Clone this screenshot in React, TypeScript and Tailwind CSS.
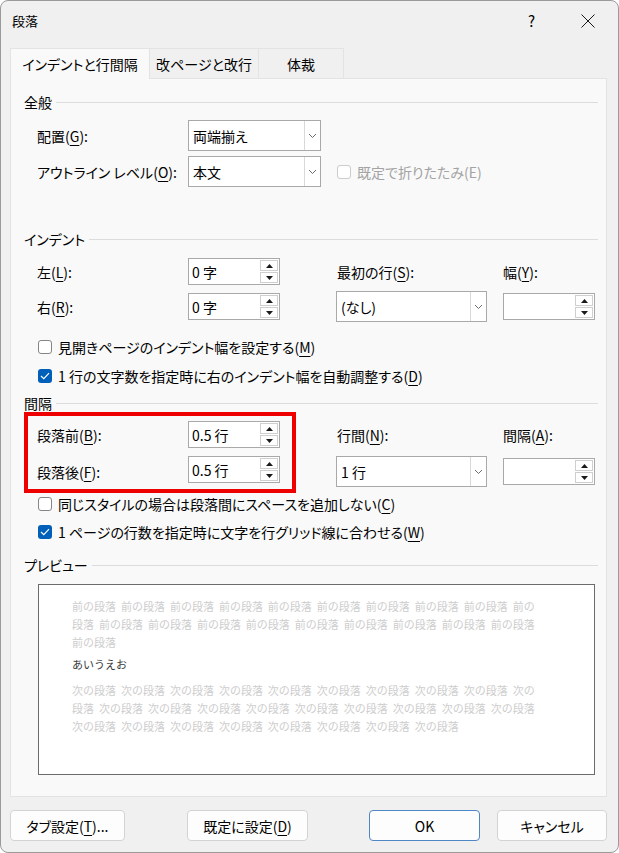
import React from 'react';

const Acc = ({ children }: { children: React.ReactNode }) => (
  <span className="underline underline-offset-[3px] decoration-1">{children}</span>
);

const Chevron = () => (
  <svg width="9" height="6" viewBox="0 0 9 6">
    <path d="M1 1 L4.5 4.5 L8 1" fill="none" stroke="#6b6b6b" strokeWidth="1" />
  </svg>
);

const Tri = ({ up }: { up?: boolean }) => (
  <svg width="7" height="4" viewBox="0 0 7 4">
    <path d={up ? 'M0 4 L3.5 0 L7 4 Z' : 'M0 0 L3.5 4 L7 0 Z'} fill="#1a1a1a" />
  </svg>
);

const Combo = ({ value, w }: { value: string; w: string }) => (
  <div className={`h-[31px] ${w} flex bg-white border border-[#a9a9a9]`}>
    <div className="flex-1 flex items-center pl-[4px]">{value}</div>
    <div className="w-[16px] border-l border-[#d9d9d9] flex items-center justify-center">
      <Chevron />
    </div>
  </div>
);

const Spin = ({ value }: { value?: string }) => (
  <div className="h-[27px] w-[92px] flex bg-white border border-[#a9a9a9]">
    <div className="flex-1 flex items-center pl-[3px]">{value}</div>
    <div className="w-[19px] flex flex-col py-[1px] pr-[1px] gap-[1px]">
      <div className="flex-1 border border-[#cfcfcf] flex items-center justify-center">
        <Tri up />
      </div>
      <div className="flex-1 border border-[#cfcfcf] flex items-center justify-center">
        <Tri />
      </div>
    </div>
  </div>
);

const Check = ({ checked, disabled }: { checked?: boolean; disabled?: boolean }) =>
  checked ? (
    <div className="w-[14px] h-[14px] rounded-[3px] bg-[#005fb8] flex items-center justify-center">
      <svg width="10" height="8" viewBox="0 0 10 8">
        <path d="M1 4 L3.8 6.6 L9 1.2" fill="none" stroke="#fff" strokeWidth="1.2" />
      </svg>
    </div>
  ) : (
    <div
      className={`w-[14px] h-[14px] rounded-[3px] bg-white border ${
        disabled ? 'border-[#cccccc]' : 'border-[#858585]'
      }`}
    />
  );

const Header = ({ title, className }: { title: string; className: string }) => (
  <div className={`flex items-center h-[20px] pl-[13px] pr-[8px] ${className}`}>
    <span>{title}</span>
    <div className="flex-1 h-px bg-[#dcdcdc] ml-[4px]" />
  </div>
);

const CheckRow = ({ checked, className, children }: { checked?: boolean; className: string; children: React.ReactNode }) => (
  <div className={`flex items-center h-[20px] pl-[27px] gap-[6px] ${className}`}>
    <Check checked={checked} />
    <span>{children}</span>
  </div>
);

const prev1 = [
  '前の段落 前の段落 前の段落 前の段落 前の段落 前の段落 前の段落 前の段落 前の段落 前の',
  '段落 前の段落 前の段落 前の段落 前の段落 前の段落 前の段落 前の段落 前の段落 前の段落',
  '前の段落',
];
const next1 = [
  '次の段落 次の段落 次の段落 次の段落 次の段落 次の段落 次の段落 次の段落 次の段落 次の',
  '段落 次の段落 次の段落 次の段落 次の段落 次の段落 次の段落 次の段落 次の段落 次の段落',
  '次の段落 次の段落 次の段落 次の段落 次の段落 次の段落 次の段落 次の段落',
];

export default function App() {
  return (
    <div className="w-[619px] h-[853px] bg-[#f0f0f0] border border-[#9a9a9a] rounded-[8px] overflow-hidden flex flex-col text-[14px] text-black font-['Noto_Sans_CJK_JP',sans-serif] [font-feature-settings:'palt'] leading-none">
      {/* title bar */}
      <div className="h-[39px] flex items-center pl-[11px] shrink-0">
        <span className="text-[13px]">段落</span>
        <span className="ml-auto text-[15px] mr-[46px]">?</span>
        <svg width="14" height="14" viewBox="0 0 14 14" className="mr-[23px]">
          <path d="M0.5 0.5 L13.5 13.5 M13.5 0.5 L0.5 13.5" stroke="#1a1a1a" strokeWidth="1" />
        </svg>
      </div>

      {/* tabs */}
      <div className="flex ml-[9px] mt-[8px] h-[31px] shrink-0 relative z-10">
        <div className="w-[140px] bg-[#f9f9f9] border border-b-0 border-[#e3e3e3] flex items-center justify-center">
          インデントと行間隔
        </div>
        <div className="w-[109px] border-t border-r border-[#e3e3e3] border-b flex items-center justify-center">
          改ページと改行
        </div>
        <div className="w-[85px] border-t border-r border-[#e3e3e3] border-b flex items-center justify-center">
          体裁
        </div>
      </div>

      {/* panel */}
      <div className="ml-[9px] -mt-px w-[597px] h-[719px] bg-[#f9f9f9] border border-[#e3e3e3] shrink-0 flex flex-col">
        <Header title="全般" className="mt-[13px]" />
        <div className="flex items-center pl-[26px] mt-[8px]">
          <span className="w-[151px]">
            配置(<Acc>G</Acc>):
          </span>
          <Combo value="両端揃え" w="w-[133px]" />
        </div>
        <div className="flex items-center pl-[26px] mt-[5px]">
          <span className="w-[151px]">
            アウトライン レベル(<Acc>O</Acc>):
          </span>
          <Combo value="本文" w="w-[133px]" />
          <div className="ml-[16px] flex items-center gap-[6px] text-[#a3a3a3]">
            <Check disabled />
            <span>既定で折りたたみ(E)</span>
          </div>
        </div>

        <Header title="インデント" className="mt-[42px]" />
        <div className="flex items-center pl-[26px] mt-[9px] h-[27px]">
          <span className="w-[151px]">
            左(<Acc>L</Acc>):
          </span>
          <Spin value="0 字" />
          <span className="ml-[57px] w-[166px]">
            最初の行(<Acc>S</Acc>):
          </span>
          <span>
            幅(<Acc>Y</Acc>):
          </span>
        </div>
        <div className="flex items-center pl-[26px] mt-[6px] h-[31px]">
          <span className="w-[151px]">
            右(<Acc>R</Acc>):
          </span>
          <Spin value="0 字" />
          <div className="ml-[56px]">
            <Combo value="(なし)" w="w-[151px]" />
          </div>
          <div className="ml-[16px]">
            <Spin />
          </div>
        </div>
        <CheckRow className="mt-[15px]">
          見開きページのインデント幅を設定する(<Acc>M</Acc>)
        </CheckRow>
        <CheckRow checked className="mt-[9px]">
          1 行の文字数を指定時に右のインデント幅を自動調整する(<Acc>D</Acc>)
        </CheckRow>

        <Header title="間隔" className="mt-[7px]" />
        <div className="relative mt-[8px]">
          <div className="flex items-center pl-[26px] h-[27px]">
            <span className="w-[151px]">
              段落前(<Acc>B</Acc>):
            </span>
            <Spin value="0.5 行" />
            <span className="ml-[57px] w-[166px]">
              行間(<Acc>N</Acc>):
            </span>
            <span>
              間隔(<Acc>A</Acc>):
            </span>
          </div>
          <div className="flex items-center pl-[26px] mt-[8px] h-[31px]">
            <span className="w-[151px]">
              段落後(<Acc>F</Acc>):
            </span>
            <div className="self-start">
              <Spin value="0.5 行" />
            </div>
            <div className="ml-[56px]">
              <Combo value="1 行" w="w-[151px]" />
            </div>
            <div className="ml-[16px]">
              <Spin />
            </div>
          </div>
          <div className="absolute left-[13px] top-[-9px] w-[272px] h-[81px] border-[4px] border-[#ee0000]" />
        </div>
        <CheckRow className="mt-[7px]">
          同じスタイルの場合は段落間にスペースを追加しない(<Acc>C</Acc>)
        </CheckRow>
        <CheckRow checked className="mt-[8px]">
          1 ページの行数を指定時に文字を行グリッド線に合わせる(<Acc>W</Acc>)
        </CheckRow>

        <Header title="プレビュー" className="mt-[13px]" />
        <div className="ml-[27px] mt-[9px] w-[557px] h-[191px] bg-white border border-[#6b6b6b] pl-[33px] pt-[12px] text-[11px] leading-[18px] [font-feature-settings:normal] [word-spacing:2.5px] whitespace-pre">
          <div className="text-[#cdcdcd]">
            {prev1.map((l) => (
              <div key={l}>{l}</div>
            ))}
          </div>
          <div className="text-[#3a3a3a] mt-[4px]">あいうえお</div>
          <div className="text-[#cdcdcd] mt-[8px]">
            {next1.map((l) => (
              <div key={l}>{l}</div>
            ))}
          </div>
        </div>
      </div>

      {/* buttons */}
      <div className="flex ml-[9px] mt-[13px] h-[31px] shrink-0">
        <button className="w-[115px] rounded-[4px] border border-[#d3d3d3] bg-[#fdfdfd]">
          タブ設定(<Acc>T</Acc>)...
        </button>
        <button className="ml-[62px] w-[121px] rounded-[4px] border border-[#d3d3d3] bg-[#fdfdfd]">
          既定に設定(<Acc>D</Acc>)
        </button>
        <button className="ml-[61px] w-[111px] rounded-[4px] border border-[#4f86c4] bg-[#fdfdfd]">
          OK
        </button>
        <button className="ml-[17px] w-[110px] rounded-[4px] border border-[#d3d3d3] bg-[#fdfdfd]">
          キャンセル
        </button>
      </div>
    </div>
  );
}
